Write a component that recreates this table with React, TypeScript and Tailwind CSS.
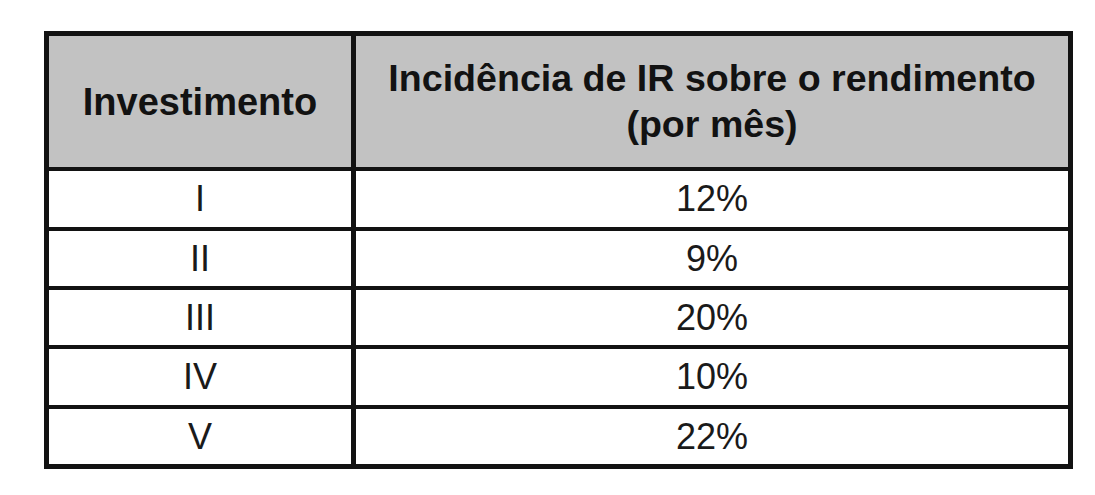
import React from "react";

const rows: [string, string][] = [
  ["I", "12%"],
  ["II", "9%"],
  ["III", "20%"],
  ["IV", "10%"],
  ["V", "22%"],
];

export default function App() {
  return (
    <div
      className="w-[1095px] h-[495px] bg-white pl-[44px] pt-[31px]"
      style={{ fontFamily: '"Liberation Sans", Arial, sans-serif' }}
    >
      <div className="w-[1029px] h-[438px] bg-[#121212] p-[5px] grid grid-cols-[302px_712px] grid-rows-[131px_56px_55px_55px_56px_55px] gap-x-[5px] gap-y-[4px]">
        <div className="bg-[#c2c2c2] flex items-center justify-center text-[38px] font-bold text-[#121212] leading-[46px]">
          Investimento
        </div>
        <div className="bg-[#c2c2c2] flex items-center justify-center text-center text-[37.6px] font-bold text-[#121212] leading-[46px] pb-[2px]">
          <span>
            Incidência de IR sobre o rendimento
            <br />
            (por mês)
          </span>
        </div>
        {rows.map(([a, b]) => (
          <React.Fragment key={a}>
            <div className="bg-white flex items-center justify-center text-[36px] text-[#1a1a1a] leading-none">
              {a}
            </div>
            <div className="bg-white flex items-center justify-center text-[36px] text-[#1a1a1a] leading-none">
              {b}
            </div>
          </React.Fragment>
        ))}
      </div>
    </div>
  );
}
